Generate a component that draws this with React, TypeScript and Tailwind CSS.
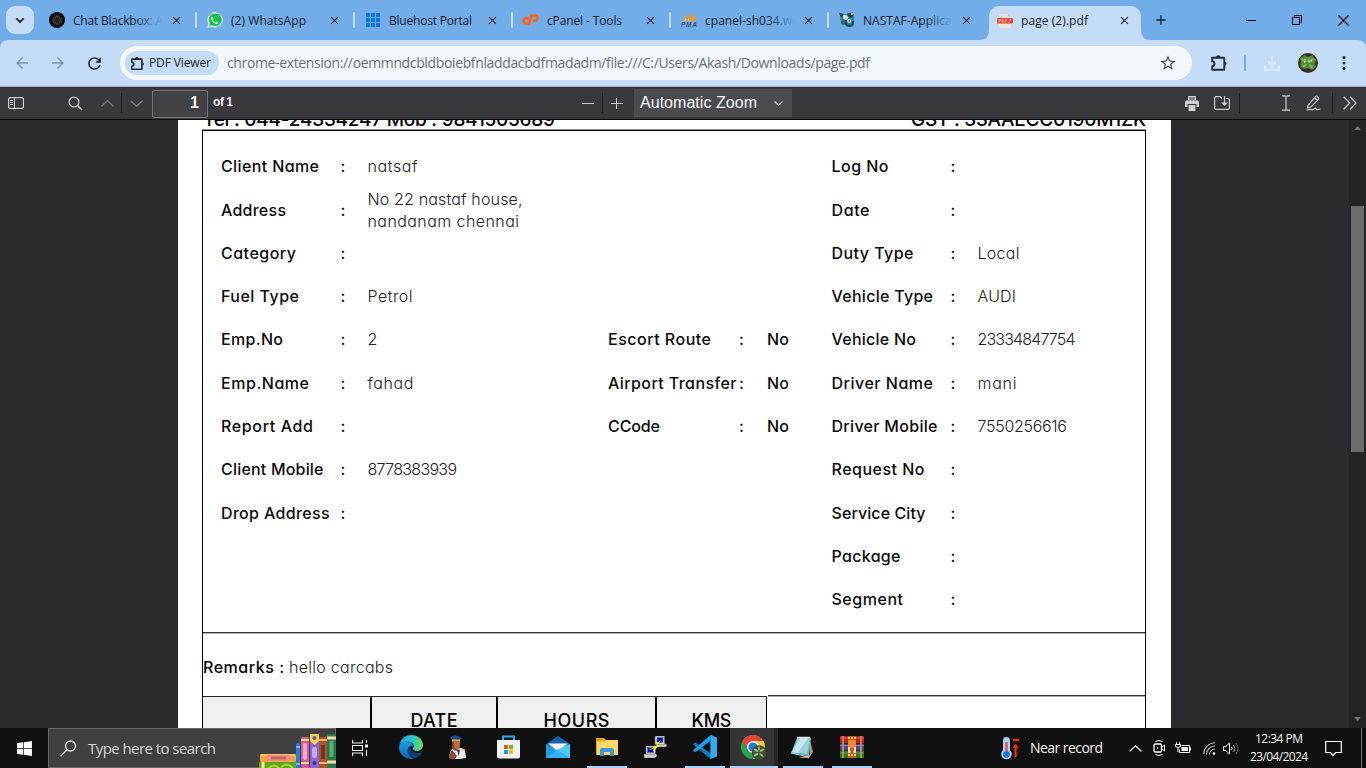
import React, { useLayoutEffect, useRef } from "react";
import { MdArrowBack, MdArrowForward, MdRefresh, MdStarBorder, MdClose, MdAdd, MdPhone } from "react-icons/md";
import { FaWindows } from "react-icons/fa";

/* Text whose tracking is adjusted so that it spans a given width. */
function Fit({ w, children, className = "" }: { w: number; children: string; className?: string }) {
  const ref = useRef<HTMLSpanElement>(null);
  useLayoutEffect(() => {
    const el = ref.current;
    if (!el || children.length < 2) return;
    el.style.letterSpacing = "0px";
    const natural = el.getBoundingClientRect().width;
    const gap = (w - natural) / (children.length - 1);
    el.style.letterSpacing = `${gap}px`;
    el.style.marginRight = `${-gap}px`;
  }, [w, children]);
  return (
    <span ref={ref} className={`inline-block whitespace-pre ${className}`}>
      {children}
    </span>
  );
}

const UI = "font-['Open_Sans','Noto_Sans',sans-serif]";

/* ---------- favicons ---------- */
const Blackbox = () => (
  <svg width="16" height="16" viewBox="0 0 16 16">
    <circle cx="8" cy="8" r="8" fill="#050505" />
    <g fill="#8b8b8b">
      {[4, 6, 8, 10, 12].map((y, j) =>
        [4, 6, 8, 10, 12].map((x) => <circle key={`${x}-${y}`} cx={x + (j % 2 ? 0.6 : -0.2)} cy={y} r={Math.abs(x - 8) + Math.abs(y - 8) > 6 ? 0.2 : 0.6} />)
      )}
    </g>
    <path d="M8 4.200l3.500 2v4L8 12l-3.500-1.800v-4z" stroke="#666" strokeWidth=".5" fill="none" />
  </svg>
);
const WhatsApp = () => (
  <span className="grid h-4 w-4 place-items-center">
    <svg width="16" height="16" viewBox="0 0 16 16" className="col-start-1 row-start-1">
      <path d="M8.2.3a7.6 7.6 0 0 0-6.6 11.4L.4 15.7l4.1-1.1A7.6 7.6 0 1 0 8.2.3z" fill="#fff" />
      <path d="M8.2 1.5a6.3 6.3 0 0 0-5.3 9.9L2 14l2.8-.8A6.4 6.4 0 1 0 8.2 1.5z" fill="#12c14b" />
    </svg>
    <MdPhone size={9} color="#fff" className="col-start-1 row-start-1" />
  </span>
);
const Bluehost = () => (
  <svg width="14" height="14" viewBox="0 0 14 14" fill="#0b76da">
    {[0, 5, 10].map((y) => [0, 5, 10].map((x) => <rect key={`${x}-${y}`} x={x} y={y} width="4" height="4" />))}
  </svg>
);
const CPanel = () => (
  <svg width="17" height="12" viewBox="0 0 17 12" fill="none" stroke="#ff6113" strokeWidth="2.500">
    <path d="M6.800 4.200H4.300a2.700 2.700 0 0 0 0 5.400h1.500" />
    <path d="M6.700 11.500L9.300 1.500h3.400a2.600 2.600 0 0 1 0 5.500H10.500" />
  </svg>
);
const Pma = () => (
  <svg width="16" height="16" viewBox="0 0 16 16">
    <path d="M1 9L5 2.5V9zM5.700 9Q8.500 5 7.800 0 11 4 10 9zM10.500 9Q12 5 10.800 1.500 14 4 15.500 9z" fill="#f8980e" />
    <path d="M3 9l2-3v3zM7 9l1-4v4z" fill="#ffc46b" />
    <text x="0" y="15.300" fontSize="6.600" fontWeight="bold" fontStyle="italic" fontFamily="Liberation Sans, sans-serif" fill="#4b4f80" textLength="16">PMA</text>
  </svg>
);
const Nastaf = () => (
  <svg width="16" height="16" viewBox="0 0 16 16">
    <path d="M1 2h14v11l-5 1-8-2z" fill="#14909c" />
    <path d="M0 1l4 .5 1 2.500-3 1.500zM8 1.500l6-1v4l-3 2z" fill="#254450" />
    <path d="M12 1h2v2h-2z" fill="#e0b43a" />
    <path d="M4 3c3-1 5 1 5 3l-1 2-4-1z" fill="#e6e2da" />
    <path d="M3 7l3 1-1 5-3-1z" fill="#35606c" />
    <path d="M7 8v2.500q0 3.500 3.500 3.500t3.500-3.500V9" fill="none" stroke="#1c4360" strokeWidth="2" />
    <circle cx="10.300" cy="9" r="2" fill="#dfe8ea" /><circle cx="10.300" cy="9" r=".8" fill="#14506a" />
  </svg>
);
const PdfIcon = () => (
  <svg width="16" height="16" viewBox="0 0 16 16">
    <path d="M2 1h9l3 3v8.500q0 2.500-2.500 2.500H4.500Q2 15 2 12.500z" fill="#e9e6e2" />
    <path d="M11 1v3h3z" fill="#c9c6c2" />
    <rect x="0" y="5" width="16" height="5.500" rx=".8" fill="#f0431f" />
    <path d="M2 6.300v3M2 6.300h1.500v1.500H2M5 6.300v3h1q1-1.500 0-3zM8.300 9.300v-3H10M8.300 7.800H10M12 9.300l2-3M12 6.300h2" fill="none" stroke="#ffd9cf" strokeWidth=".7" />
  </svg>
);

const Puzzle = ({ size = 18, color = "#1f2937" }: { size?: number; color?: string }) => (
  <svg width={size} height={size} viewBox="0 0 18 18">
    <path
      d="M2.200 3.700H14.300V15.800H2.200V12.200C5.200 12.200 5.200 7.400 2.200 7.400Z"
      fill="none" stroke={color} strokeWidth="1.900" strokeLinejoin="round"
    />
    <path d="M6 3.500C6 .6 10.500.6 10.500 3.500zM14.300 7.500c3 0 3 4.200 0 4.200z" fill={color} />
  </svg>
);

const tabs = [
  { title: "Chat Blackbox: A", w: 90, icon: <Blackbox />, fade: true },
  { title: "(2) WhatsApp", w: 75, icon: <WhatsApp /> },
  { title: "Bluehost Portal", w: 83, icon: <Bluehost /> },
  { title: "cPanel - Tools", w: 75, icon: <CPanel /> },
  { title: "cpanel-sh034.we", w: 94, icon: <Pma />, fade: true },
  { title: "NASTAF-Applicat", w: 93, icon: <Nastaf />, fade: true },
];

function TabStrip() {
  return (
    <div className="flex h-10 bg-[#72ace9] text-[#16202c]">
      <div className="mt-1.5 ml-1.5 grid h-7 w-7 place-items-center rounded-[9px] bg-[#c5dcf7]">
        <svg width="10" height="7" viewBox="0 0 10 7"><path d="M1.300 1.300L5 5l3.700-3.700" fill="none" stroke="#1c2733" strokeWidth="1.900" /></svg>
      </div>
      <div className="ml-1 flex">
        {tabs.map((t, i) => (
          <div key={t.title} className="flex w-[158px] items-center">
            <span className="ml-2.5 flex w-[17px] shrink-0 justify-center">{t.icon}</span>
            <span className="relative mt-px ml-2 w-[90px] overflow-hidden text-xs leading-5">
              <Fit w={t.w}>{t.title}</Fit>
              {t.fade && <span className="absolute inset-y-0 right-0 w-7 bg-linear-to-r from-[#72ace9]/0 to-[#72ace9]" />}
            </span>
            <MdClose size={13} className="ml-[7px] shrink-0" />
            {i < 5 && <span className="-mr-px ml-auto h-4 w-0.5 shrink-0 rounded-full bg-[#c5dcf7]" />}
          </div>
        ))}
      </div>
      <div className="ml-[-7px] flex items-end">
        <svg width="10" height="10" viewBox="0 0 10 10"><path d="M10 0v10h-10Q10 10 10 0z" fill="#c5dcf7" /></svg>
        <div className="flex h-[34px] w-[152px] items-center rounded-t-[10px] bg-[#c5dcf7] pb-[5px]">
          <span className="ml-2"><PdfIcon /></span>
          <span className="mt-px ml-2 w-[97px] text-xs leading-5"><Fit w={67}>page (2).pdf</Fit></span>
          <MdClose size={13} />
        </div>
        <svg width="10" height="10" viewBox="0 0 10 10"><path d="M0 0v10h10Q0 10 0 0z" fill="#c5dcf7" /></svg>
      </div>
      <div className="grid w-5 place-items-center"><MdAdd size={16} /></div>
      <div className="ml-auto flex text-black">
        <div className="grid w-[46px] place-items-center"><svg width="10" height="10"><path d="M0 5.500h10" stroke="currentColor" /></svg></div>
        <div className="grid w-[46px] place-items-center">
          <svg width="10" height="10" viewBox="0 0 10 10" fill="none" stroke="currentColor"><path d="M.5 2.500h7v7h-7zM2.500 2.500v-2h7v7h-2" /></svg>
        </div>
        <div className="grid w-[46px] place-items-center"><svg width="11" height="11" viewBox="0 0 11 11"><path d="M.5.5l10 10M10.500.5l-10 10" stroke="currentColor" strokeWidth="1.100" /></svg></div>
      </div>
    </div>
  );
}

function AddressBar() {
  return (
    <div className="bg-[#72ace9]">
      <div className="flex h-[47px] items-center rounded-t-lg border-b border-[#9db3d1] bg-[#c5dcf7]">
        <MdArrowBack size={18} color="#8194aa" className="ml-[13px]" />
        <MdArrowForward size={18} color="#8194aa" className="ml-[18px]" />
        <MdRefresh size={19} color="#1c2733" className="ml-[17.500px]" />
        <div className="ml-[16.500px] flex h-[34px] w-[1072px] items-center rounded-full bg-[#f3f8fd] px-[5px]">
          <div className="flex h-6 w-[94px] items-center rounded-full bg-[#c5dcf7] pl-[5px] text-xs text-[#1c2733]">
            <Puzzle size={15} />
            <span className="ml-1"><Fit w={62}>PDF Viewer</Fit></span>
          </div>
          <span className="ml-2 text-[14px] leading-5 text-[#6a6f76]">
            <Fit w={643}>chrome-extension://oemmndcbldboiebfnladdacbdfmadadm/file:///C:/Users/Akash/Downloads/page.pdf</Fit>
          </span>
          <MdStarBorder size={18} color="#454b52" className="mr-[10px] ml-auto" />
        </div>
        <span className="ml-[18px]"><Puzzle size={18} /></span>
        <span className="ml-4 h-4 w-0.5 rounded-full bg-[#72ace9]" />
        <svg width="16" height="16" viewBox="0 0 16 16" className="ml-[18px]"><path d="M8 1v9M4 6.500l4 4 4-4M1 10.500V15h14v-4.500" fill="none" stroke="#d8e8fc" strokeWidth="2" /></svg>
        <svg width="20" height="20" viewBox="0 0 20 20" className="ml-[18px]">
          <circle cx="10" cy="10" r="10" fill="#3a2c22" />
          <path d="M2 5l5-3 3 2 4-2 4 5-1 4 1 3-4 3-4-2-4 1-4-4 1-3z" fill="#4e8b32" />
          <path d="M9 9q-5 0-6-3 4-1 6 3zM11 9q4 0 6-3-5-1-6 3zM9 11q-4 0-6 3 5 1 6-3zM11 11q4 1 4 5-4-1-4-5z" fill="#7db559" />
          <path d="M7 6.500h1M10 5.500h1M13 7.500h1M6 9h1M10 8.500h2" stroke="#eef7e6" strokeWidth="1.300" />
        </svg>
        <svg width="4" height="16" viewBox="0 0 4 16" fill="#1c2733" className="ml-[24px]"><circle cx="2" cy="2.500" r="1.500" /><circle cx="2" cy="8" r="1.500" /><circle cx="2" cy="13.500" r="1.500" /></svg>
      </div>
    </div>
  );
}

const Sep = ({ className = "" }: { className?: string }) => <span className={`h-5 w-px shrink-0 bg-[#1f1f23] ${className}`} />;

function PdfToolbar() {
  return (
    <div className="flex h-[33px] items-center border-b border-[#0c0c0d] bg-[#38383d] font-['Liberation_Sans',Arial,sans-serif] text-[#f9f9fa]">
      <svg width="16" height="12" viewBox="0 0 16 12" className="ml-2" fill="none" stroke="#cbcbcd"><rect x=".6" y=".6" width="14.800" height="10.800" rx="1.300" strokeWidth="1.200" /><path d="M6.500 1v10M2 3.500h3M2 5.500h3M2 7.500h3" /></svg>
      <svg width="15" height="15" viewBox="0 0 15 15" className="ml-[44px]" fill="none" stroke="#cbcbcd"><circle cx="6" cy="6" r="4.900" strokeWidth="1.300" /><path d="M9.500 9.500l4.500 4.500" strokeWidth="1.700" /></svg>
      <svg width="13" height="7" viewBox="0 0 13 7" className="ml-[18px]" fill="none" stroke="#77777b" strokeWidth="1.200"><path d="M.6 6.300l5.900-5.500 5.900 5.500" /></svg>
      <Sep className="ml-[7px]" />
      <svg width="13" height="7" viewBox="0 0 13 7" className="ml-2" fill="none" stroke="#88888c" strokeWidth="1.200"><path d="M.6.7l5.900 5.500L12.400.7" /></svg>
      <div className="mt-px ml-[9px] flex h-7 w-14 items-center justify-end rounded-[2px] border border-[#75757a] bg-[#414146] pr-2 pb-px text-base font-bold">1</div>
      <span className="ml-[5px] -mt-0.5 text-xs font-bold"><Fit w={20}>of 1</Fit></span>
      <svg width="12" height="12" className="ml-[349px]"><path d="M0 6.500h12" stroke="#cbcbcd" /></svg>
      <Sep className="ml-2" />
      <svg width="12" height="12" className="ml-2"><path d="M0 6.500h12M5.500 1v11" stroke="#cbcbcd" /></svg>
      <div className="ml-[11px] flex h-7 w-[158px] items-center bg-[#4a4a4f] pr-[9px] pl-1.5 text-base">
        <span><Fit w={117}>Automatic Zoom</Fit></span>
        <svg width="9" height="5" viewBox="0 0 9 5" className="ml-auto"><path d="M.5.5l4 3.800 4-3.800" fill="none" stroke="#d6d6d8" strokeWidth="1.200" /></svg>
      </div>
      <svg width="14" height="15" viewBox="0 0 14 15" className="ml-[393px]"><path d="M3 0h8v4.500H3z" fill="#d0d0d2" /><path d="M4.200 1.200h5.600V4H4.200z" fill="#7d7d80" /><path d="M1.500 4.500h11Q14 4.500 14 6v5h-2.500V8h-9v3H0V6q0-1.500 1.500-1.500zM3.500 9h7v6h-7z" fill="#d0d0d2" /></svg>
      <svg width="16" height="14" viewBox="0 0 16 14" className="ml-[15px]" fill="none" stroke="#cbcbcd" strokeWidth="1.200"><path d="M12 2.500h2q1.400 0 1.400 1.400v8q0 1.400-1.400 1.400H2Q.6 13.300.6 11.900V2Q.6.6 2 .6h4l1.700 1.900M10.500 0v9" /><path d="M7 6.500l3.500 3.500L14 6.500z" fill="#cbcbcd" stroke="none" /></svg>
      <Sep className="ml-[9px]" />
      <svg width="8" height="16" viewBox="0 0 8 16" className="ml-[42px]" fill="none" stroke="#cbcbcd" strokeWidth="1.200"><path d="M0 .8h2.500Q4 .8 4 2v12q0 1.200 1.500 1.200H8M8 .8H5.500Q4 .8 4 2M4 14q0 1.200-1.500 1.200H0" /></svg>
      <svg width="15" height="16" viewBox="0 0 15 16" className="ml-[16px]" fill="none" stroke="#cbcbcd" strokeWidth="1.200"><path d="M2 10.500L9.500 1.700q1-1 2.100 0l.7.600q1 1 .1 2L5 12l-3.500.8zM8.500 3l2.800 2.500M.5 15.200q2-1 3.300-.8t2.800.5l2.400-1.700q.8-.4 1 .6t1.300.8l3.200-.6" /></svg>
      <Sep className="ml-[11px]" />
      <svg width="14" height="14" viewBox="0 0 14 14" className="ml-[10px]" fill="none" stroke="#cbcbcd" strokeWidth="1.300"><path d="M.7.8L6.700 7l-6 6.200M7 .8L13 7l-6 6.200" /></svg>
    </div>
  );
}

type Pair = [string, number, string?, number?];
const left: Pair[] = [
  ["Client Name", 98, "natsaf", 50], ["Address", 65], ["Category", 75], ["Fuel Type", 78, "Petrol", 45],
  ["Emp.No", 62, "2", 9], ["Emp.Name", 88, "fahad", 46], ["Report Add", 92], ["Client Mobile", 102.5, "8778383939", 89.5], ["Drop Address", 108.5],
];
const middle: Record<number, Pair> = { 4: ["Escort Route", 103], 5: ["Airport Transfer", 128.5], 6: ["CCode", 52] };
const right: Pair[] = [
  ["Log No", 57], ["Date", 38], ["Duty Type", 82, "Local", 42], ["Vehicle Type", 101.5, "AUDI", 38.5], ["Vehicle No", 84.5, "23334847754", 98],
  ["Driver Name", 101.5, "mani", 39], ["Driver Mobile", 106, "7550256616", 89.5], ["Request No", 93], ["Service City", 94], ["Package", 69], ["Segment", 71.5],
];

const Label = ({ p }: { p?: Pair }) => <>
  <span>{p && <Fit w={p[1]}>{p[0]}</Fit>}</span>
  <span>{p && ":"}</span>
</>;
const Value = ({ p }: { p?: Pair }) => (
  <span className="font-light text-[#222]">{p && p[2] && <Fit w={p[3] ?? 0}>{p[2]}</Fit>}</span>
);

function Page() {
  return (
    <div className="ml-[178px] h-[608px] w-[993px] overflow-hidden bg-white pt-px pl-6 font-['Inter','Lato',sans-serif] text-black [font-feature-settings:'cv11']">
      <div className="-mt-[12px] flex h-[21px] w-[944px] items-center justify-between pl-px text-[19px] leading-[22px] font-medium">
        <Fit w={352}>Tel : 044-24334247 Mob : 9841505689</Fit>
        <Fit w={235}>GST : 33AAECC0190M1ZK</Fit>
      </div>
      <div className="h-[620px] w-[944px] border-x border-t border-black shadow-[0_-1px_0_#8a8a8a]">
        <div className="h-[502px] border-b border-[#333] pt-[13.500px] pl-[18px] text-base leading-[22px] font-[480] text-[#0a0a0a] shadow-[0_1px_0_#bbb]">
          {right.map((r, i) => (
            <div key={r[0]} className="grid h-[43.340px] grid-cols-[119.500px_27px_240.500px_131px_28px_64.500px_119px_27px_1fr] items-center">
              <Label p={left[i]} />
              {i === 1 ? (
                <span className="flex flex-col font-light text-[#222]">
                  <Fit w={155} className="self-start">No 22 nastaf house,</Fit>
                  <Fit w={151.5} className="self-start">nandanam chennai</Fit>
                </span>
              ) : <Value p={left[i]} />}
              <Label p={middle[i]} />
              <span>{middle[i] && <Fit w={22}>No</Fit>}</span>
              <Label p={r} />
              <Value p={r} />
            </div>
          ))}
        </div>
        <div className="flex h-[63px] items-center pt-1 text-base font-[480]">
          <Fit w={81}>Remarks :</Fit>
          <span className="ml-[5px] font-light text-[#222]"><Fit w={104}>hello carcabs</Fit></span>
        </div>
        <div className="flex">
          <div className="grid h-12 grid-cols-[169px_126px_159px_110px] border-t border-[#222] bg-[#f0f0f0] text-center text-lg leading-[47px] font-[480]">
            <div className="border-r-2 border-black" />
            <div className="border-r-2 border-black"><Fit w={47}>DATE</Fit></div>
            <div className="border-r-2 border-black"><Fit w={66}>HOURS</Fit></div>
            <div className="border-r border-black"><Fit w={40}>KMS</Fit></div>
          </div>
          <div className="-mt-px ml-px h-12 flex-1 border-t border-[#333] shadow-[inset_0_1px_0_#aaa]" />
        </div>
      </div>
    </div>
  );
}

function Viewer() {
  return (
    <div className="flex h-[608px] justify-between bg-[#2a2a2e]">
      <Page />
      <div className="flex w-[17px] flex-col items-center bg-[#232327]">
        <svg width="7" height="4" className="mt-1.5"><path d="M0 4l3.500-4L7 4z" fill="#737376" /></svg>
        <div className="mt-[76px] h-[246px] w-[13px] bg-[#6c6c6e]" />
        <svg width="7" height="4" className="mt-auto mb-[7px]"><path d="M0 0l3.500 4L7 0z" fill="#737376" /></svg>
      </div>
    </div>
  );
}

/* ---------- taskbar icons ---------- */
const Books = () => (
  <svg width="77" height="35" viewBox="0 0 77 35">
    <rect x="0" y="28" width="39" height="7" rx="1" fill="#60a51f" /><path d="M9 35q6-7 12 0M22 33q6-5 12 1" stroke="#a5d735" strokeWidth="2" fill="none" />
    <path d="M4 28v7" stroke="#ffe27b" strokeWidth="3" />
    <rect x="1" y="20" width="36" height="8" rx="1" fill="#eba93a" /><path d="M2 21h34" stroke="#ffe07c" /><rect x="7" y="21" width="25" height="6" rx="3" fill="#f6898b" /><rect x="12" y="22.500" width="15" height="3" rx="1" fill="#bd6b68" />
    <rect x="37" y="9" width="4" height="25" rx="1" fill="#237de0" /><path d="M37 13h4M37 30h4" stroke="#96cbff" strokeWidth="1.500" />
    <rect x="42" y="3" width="8" height="31" rx="1" fill="#d6559b" /><rect x="44" y="9" width="4" height="17" rx="1.500" fill="#f7a7d2" /><path d="M42 6h8M42 29h8" stroke="#ffdc86" strokeWidth="2" />
    <rect x="51" y="0" width="9" height="34" rx="1" fill="#8a65d6" /><path d="M51 0h9v7l-4.500 4L51 7z" fill="#ffd24e" /><circle cx="55.500" cy="4" r="2" fill="#6b57a6" /><rect x="53" y="13" width="5" height="11" rx="2" fill="#c4a9ff" /><circle cx="55.500" cy="29" r="2" fill="#4b318c" />
    <rect x="60" y="3" width="8" height="31" rx="1" fill="#a7562b" /><path d="M60 6h8M60 29h8" stroke="#f5b46e" strokeWidth="2" /><rect x="62" y="11" width="4" height="14" fill="#70371c" />
    <rect x="68" y="0" width="9" height="34" rx="1" fill="#23784c" /><path d="M68 4h9M68 28h9" stroke="#ffdda0" strokeWidth="3" /><rect x="70.500" y="7" width="4" height="16" rx="1" fill="#59ad77" />
  </svg>
);
const Edge = () => (
  <svg width="24" height="24" viewBox="0 0 24 24">
    <defs>
      <linearGradient id="eg" x1="0" x2="1"><stop offset="0" stopColor="#239edb" /><stop offset=".55" stopColor="#2bc4d4" /><stop offset="1" stopColor="#6ddc4b" /></linearGradient>
      <linearGradient id="eb" x1="0" y1="0" x2="0" y2="1"><stop offset="0" stopColor="#1a9de2" /><stop offset="1" stopColor="#0d61ae" /></linearGradient>
    </defs>
    <path d="M.5 10C1.500 3.500 6.500 0 12 0c7 0 12 4.800 12 10 0 3.800-2.700 6-6 6-3 0-4.600-1.400-4.100-2.500.8-1.200 1.600-3.500-.6-5.300C10.300 5.900 3 6 .5 10z" fill="url(#eg)" />
    <path d="M0 12.500C.2 8.500 4.400 6.500 8.500 6.900 12.800 7.300 14 9.300 13.800 11c-1.900-1.200-5 .8-5 4.400 0 3.200 2.500 7 6.500 8.100C7.300 25.500 0 19.800 0 12.500z" fill="url(#eb)" />
    <path d="M8.800 15.400c0-1.800 1-3.500 2.600-4.300-.3 5 4 8 10.900 6.500.5-.2.800.1.500.6-1.500 2.800-4.500 5-7.500 5.300-4-1.100-6.500-4.900-6.500-8.100z" fill="#123e75" />
  </svg>
);
const Pilot = () => (
  <svg width="18" height="24" viewBox="0 0 18 24">
    <path d="M0 23q1-9 5-10h7q5 1 5 10l-6 1H6z" fill="#e9ebf0" /><path d="M0 23q1-6 3-8l5 6-2 3z" fill="#8a4a30" />
    <path d="M3 5h8v7q-1 4-4 4t-4-4z" fill="#b96b42" /><path d="M3 7h2v5l3 3q-5 0-5-5z" fill="#7a432b" />
    <path d="M1 2q5-3 10 0l2 1-2 2H3z" fill="#1e4b83" /><path d="M3 4.500h8v1.300H3z" fill="#f5bf31" /><path d="M8 15l1.500 6L11 15z" fill="#24375a" />
    <path d="M13 15h3" stroke="#f1b53a" strokeWidth="1.500" />
  </svg>
);
const Store = () => (
  <svg width="23" height="24" viewBox="0 0 23 24">
    <path d="M6 6V1.500h11V6" fill="none" stroke="#2ba9ec" strokeWidth="2" /><path d="M0 5h23v16q0 2.500-2.500 2.500h-18Q0 23.500 0 21z" fill="#f1f2f3" />
    <rect x="7" y="10" width="4" height="4" fill="#f25022" /><rect x="12" y="10" width="4" height="4" fill="#7fba00" /><rect x="7" y="15" width="4" height="4" fill="#00a4ef" /><rect x="12" y="15" width="4" height="4" fill="#ffb900" />
  </svg>
);
const Mail = () => (
  <svg width="24" height="22" viewBox="0 0 24 22">
    <path d="M0 8l12-8 12 8v14H0z" fill="#1261b0" /><path d="M2 7.500h20L12 16z" fill="#f7f7f7" /><path d="M0 8l24 14H0z" fill="#1b9fe6" /><path d="M24 8v14L10 14z" fill="#4ccbf9" /><path d="M24 22H0l10-8z" fill="#2fb3f0" />
  </svg>
);
const Folder = () => (
  <svg width="22" height="19" viewBox="0 0 22 19">
    <path d="M0 0h8l2 2h12v15H0z" fill="#e4a11c" /><path d="M1 3.500h8L10.500 2H22v15H1z" fill="#ffd765" /><path d="M4 18v-6q0-2 2-2h10q2 0 2 2v6h-4v-4H8v4z" fill="#3c96dc" />
  </svg>
);
const Putty = () => (
  <svg width="23" height="22" viewBox="0 0 23 22" stroke="#686868" strokeWidth=".5">
    <path d="M13 8h9l1 2-2 1H12zM0 18h12l1 2-2 2H0z" fill="#cfcfcf" />
    <rect x="11" y="0" width="9.500" height="8.500" fill="#d8d8d8" /><rect x="13" y="1.500" width="6" height="5" fill="#0808c9" /><rect x="2" y="10" width="9.500" height="8" fill="#d8d8d8" /><rect x="3.500" y="11.500" width="6" height="5" fill="#0808c9" />
    <path d="M17 4l-5 3.500 1 1.500-8 5 5-1.500-1 3 6-6-1.500-1z" fill="#fcf700" stroke="none" />
  </svg>
);
const Code = () => (
  <svg width="24" height="24" viewBox="0 0 24 24">
    <path d="M17.500 0L24 2.800v18.400L17.500 24 0 9.200l2-2 15.500 11z" fill="#1577bd" /><path d="M17.500 0v6L2 17.300l-2-2z" fill="#1f9af0" /><path d="M17.500 0L24 2.800v18.400L17.500 24z" fill="#33a9f3" />
  </svg>
);
const Chrome = () => (
  <svg width="26" height="25" viewBox="0 0 26 25">
    <circle cx="12" cy="12" r="12" fill="#26a450" /><path d="M1.600 6A12 12 0 0 1 22.400 6H12L6.800 15z" fill="#e64333" /><path d="M22.400 6A12 12 0 0 1 12 24l5.200-9L12 6z" fill="#fcc62f" />
    <circle cx="12" cy="12" r="6" fill="#fff" /><circle cx="12" cy="12" r="4.600" fill="#2476e8" />
    <circle cx="18" cy="17.500" r="7.300" fill="#3d5231" />
    <path d="M17.500 17q-4 0-5-3 4-1 5 3zM18.500 17q3 0 5-3-4-1-5 3zM17.500 18q-4 0-5 3 4 1 5-3zM18.500 18q4 1 4 4-4-1-4-4zM18 16q-2-3 0-5 2 2 0 5z" fill="#a3bd85" />
  </svg>
);
const Notepad = () => (
  <svg width="23" height="22" viewBox="0 0 23 22">
    <path d="M18 1l4 15-4 6H7l12-3z" fill="#b59a64" /><path d="M6 2h14l-2 18-18-3z" fill="#69b5c9" /><path d="M7 2h12l-3 16L1 16z" fill="#97d2df" /><path d="M9 2h8L7 17l-6-1z" fill="#c4e9ee" /><path d="M6 1.500h13" stroke="#e3e7e8" strokeWidth="1.500" /><path d="M0 17l18 4" stroke="#e0edf0" />
  </svg>
);
const Rar = () => (
  <svg width="24" height="22" viewBox="0 0 24 22">
    <rect width="24" height="7" fill="#b81e35" /><rect y="7.500" width="24" height="7" fill="#4a429f" /><rect y="15" width="24" height="7" fill="#247b31" /><path d="M0 2h24M0 9.500h24M0 17h24" stroke="#fff" strokeOpacity=".3" /><path d="M3 0v22M21 0v22" stroke="#d6a430" strokeWidth="1.500" />
    <rect x="8" width="8" height="22" fill="#c45a13" /><path d="M8 2h8M8 19h8" stroke="#ffce63" strokeWidth="2" strokeDasharray="2 1" /><rect x="8" y="4" width="8" height="8" rx="1" fill="#ef8b26" /><path d="M9 11v5h1.500M15 11v5h-1.500" fill="none" stroke="#f2e8d4" strokeWidth="1.800" />
  </svg>
);

const apps = [
  { id: "edge", icon: <Edge />, line: "" },
  { id: "pilot", icon: <span className="-ml-1"><Pilot /></span>, line: "" },
  { id: "store", icon: <Store />, line: "" },
  { id: "mail", icon: <Mail />, line: "" },
  { id: "folder", icon: <Folder />, line: "w-10" },
  { id: "putty", icon: <Putty />, line: "" },
  { id: "code", icon: <Code />, line: "w-10" },
  { id: "chrome", icon: <span className="pl-[5px]"><Chrome /></span>, line: "w-12" },
  { id: "notepad", icon: <Notepad />, line: "w-10" },
  { id: "rar", icon: <Rar />, line: "w-10" },
];

function Taskbar() {
  return (
    <div className="flex h-10 bg-[#101010] text-[#f5f5f5]">
      <div className="grid w-12 place-items-center"><FaWindows size={17} color="#fff" /></div>
      <div className="flex w-[288px] items-center border border-[#686868] bg-[#404040] pl-[11px]">
        <svg width="17" height="17" viewBox="0 0 17 17" fill="none" stroke="#e6e6e6" strokeWidth="1.300"><circle cx="10.500" cy="6" r="5" /><path d="M7 9.700L.6 16.200" /></svg>
        <span className="ml-[11px] text-[15px] leading-5 text-[#d8d8d8]"><Fit w={128}>Type here to search</Fit></span>
        <span className="mt-[5px] -mr-px -mb-px ml-auto"><Books /></span>
      </div>
      <div className="mr-[2px] grid w-12 place-items-center">
        <svg width="16" height="16" viewBox="0 0 16 16" fill="none" stroke="#eee" strokeWidth="1.100"><path d="M.5 0v3h10V0M.5 5.500h10v5H.5zM.5 16v-3h10v3M14.500 0v3M14.500 10v6" /><path d="M13 4.500h3v3h-3z" fill="#fff" stroke="none" /></svg>
      </div>
      {apps.map((a) => (
        <div key={a.id} className="flex w-[49px] flex-col items-center">
          <div className={`flex h-[38px] items-center justify-center ${a.id === "chrome" ? "w-12 border-r-4 border-[#262626] bg-[#343434]" : "w-[49px]"}`}>{a.icon}</div>
          {a.line && <div className={`h-0.5 bg-[#a9d1fb] ${a.line}`} />}
        </div>
      ))}
      <div className="ml-auto flex items-center">
        <svg width="18" height="23" viewBox="0 0 18 23">
          <path d="M2 3.500a3.500 3.500 0 0 1 7 0V13a5.300 5.300 0 1 1-7 0z" fill="#a3d2fa" /><path d="M5.500 5v13" stroke="#ec4f60" strokeWidth="2.500" /><circle cx="5.500" cy="17.500" r="3.300" fill="#1976d2" />
          <path d="M12 3h6M14.500 20V8" stroke="#ff2414" strokeWidth="2.300" /><path d="M11.500 11l3-4.500 3 4.500z" fill="#ff2414" />
        </svg>
        <span className="ml-[11px] text-sm leading-5"><Fit w={73}>Near record</Fit></span>
        <svg width="13" height="7" viewBox="0 0 13 7" className="ml-[26px]" fill="none" stroke="#fff" strokeWidth="1.200"><path d="M.6 6.300l5.900-5.500 5.900 5.500" /></svg>
        <svg width="13" height="16" viewBox="0 0 13 16" className="ml-[11px]" fill="none" stroke="#fff"><path d="M2.500 1.500q3.500-2 7 0M2.500 14.500q3.500 2 7 0" /><rect x="1" y="4" width="7.500" height="8" rx="1.200" strokeWidth="1.300" /><path d="M9 7l2.500-2v6L9 9" /><circle cx="4.700" cy="8" r=".8" fill="#fff" stroke="none" /></svg>
        <svg width="17" height="13" viewBox="0 0 17 13" className="ml-[9px]" fill="none" stroke="#fff"><path d="M6.500 3.500h8v7h-10v-3M15.500 5.500v3" /><path d="M6.500 5h6.500v4H6.500z" fill="#fff" stroke="none" /><path d="M1.500 0v2.500M4.500 0v2.500M.5 2.500h5v2Q3 6.500.5 4.500zM3 6v4" /></svg>
        <svg width="13" height="13" viewBox="0 0 13 13" className="ml-[11px]" fill="none" stroke="#b8b8b8"><path d="M.7 12A11.500 11.500 0 0 1 12 .8M3.500 12.500A8.500 8.500 0 0 1 12 4M6.300 12.500A6 6 0 0 1 12 7" strokeWidth="1.100" /><circle cx="11" cy="11.500" r="1.300" fill="#fff" stroke="none" /></svg>
        <svg width="17" height="13" viewBox="0 0 17 13" className="ml-[7px]" fill="none" stroke="#fff"><path d="M.6 4.500h2.200L6.500 1v11L2.800 8.500H.6zM8.500 5q1.200 1.500 0 3" /><path d="M10.500 3q2.500 3.500 0 7" stroke="#aaa" /><path d="M13 1q3.500 5.500 0 11" stroke="#666" /></svg>
        <div className="ml-[9px] flex w-[60px] flex-col items-center text-xs leading-[18px]">
          <Fit w={48}>12:34 PM</Fit>
          <Fit w={58}>23/04/2024</Fit>
        </div>
        <svg width="17" height="17" viewBox="0 0 17 17" className="ml-[16px]" fill="none" stroke="#fff" strokeWidth="1.200"><path d="M.7 1.500h15.600v11H10.500L8 15.500l-2.500-3H.7z" /></svg>
        <span className="mr-1 ml-[19px] h-10 w-px bg-[#777]" />
      </div>
    </div>
  );
}

export default function App() {
  return (
    <div className={`h-[768px] w-[1366px] overflow-hidden ${UI}`}>
      <TabStrip />
      <AddressBar />
      <PdfToolbar />
      <Viewer />
      <Taskbar />
    </div>
  );
}
